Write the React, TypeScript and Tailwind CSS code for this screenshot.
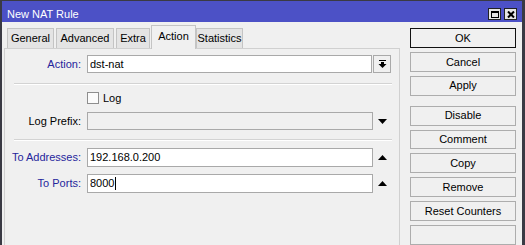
const font = "font-['Liberation_Sans',Arial,sans-serif]"

const tabs = [
  { label: 'General', w: 'w-[47px]', ml: 'ml-[3px]' },
  { label: 'Advanced', w: 'w-[58px]', ml: 'ml-[2px]' },
  { label: 'Extra', w: 'w-[34px]', ml: 'ml-[2px]' },
  { label: 'Action', w: 'w-[45px]', ml: 'ml-[1px]', active: true },
  { label: 'Statistics', w: 'w-[47px]', ml: 'ml-0' },
]

const DownTri = () => (
  <svg width="9" height="5" viewBox="0 0 9 5"><polygon points="0,0 9,0 4.5,5" fill="#000" /></svg>
)
const UpTri = () => (
  <svg width="9" height="5" viewBox="0 0 9 5"><polygon points="0,5 9,5 4.5,0" fill="#000" /></svg>
)

function Btn({ label, primary, className = '' }: { label: string; primary?: boolean; className?: string }) {
  return (
    <div
      className={`h-[22px] w-[106px] flex items-center justify-center text-[11px] text-black bg-[#f0f0f0] ${
        primary ? 'border border-[#111]' : 'border border-[#adadad]'
      } ${className}`}
    >
      {label}
    </div>
  )
}

function Label({ text, blue }: { text: string; blue?: boolean }) {
  return <div className={`w-[76px] shrink-0 text-right text-[11px] ${blue ? 'text-[#25259c]' : 'text-black'}`}>{text}</div>
}

function Sep() {
  return <div className="ml-[9px] w-[378px] h-[2px] border-t border-[#d3d3d3] border-b border-b-white" />
}

export default function App() {
  return (
    <div className={`${font} w-[525px] h-[245px] overflow-hidden bg-[#f0f0f0] border-l-2 border-r-[3px] border-t border-[#3a3a44] flex flex-col`}>
      {/* title bar */}
      <div className="h-[21px] shrink-0 bg-[#4c51c6] flex items-start justify-between pt-[7px] pl-[5px] pr-[5px]">
        <div className="text-[11px] leading-[13px] text-white">New NAT Rule</div>
        <div className="flex gap-[3px]">
          <div className="w-[13px] h-[12px] bg-[#e6e6e6] border border-[#222] flex items-center justify-center">
            <div className="w-[8px] h-[7px] border border-black border-t-2" />
          </div>
          <div className="w-[13px] h-[12px] bg-[#e6e6e6] border border-[#222] flex items-center justify-center">
            <svg width="8" height="7" viewBox="0 0 8 7">
              <path d="M1 0.5 L7 6.5 M7 0.5 L1 6.5" stroke="#000" strokeWidth="2" />
            </svg>
          </div>
        </div>
      </div>

      <div className="flex flex-1 min-h-0">
        {/* left: tabs + pane */}
        <div className="ml-[2px] w-[396px] flex flex-col">
          <div className="h-[26px] flex items-end">
            {tabs.map(t => (
              <div
                key={t.label}
                className={`${t.w} ${t.ml} flex items-center justify-center text-[11px] text-black border border-b-0 border-[#c4c4c4] ${
                  t.active ? 'h-[24px] -mb-px relative z-10 bg-[#f0f0f0] pb-[3px]' : 'h-[20px] bg-[#e4e4e4]'
                }`}
              >
                {t.label}
              </div>
            ))}
          </div>
          <div className="flex-1 border border-b-0 border-[#d0d0d0] pt-[6px]">
            {/* Action */}
            <div className="flex items-center h-[18px]">
              <Label text="Action:" blue />
              <div className="ml-[6px] w-[285px] h-[18px] bg-white border border-[#a9a9a9] flex items-center pl-[2px] text-[11px] text-black">
                dst-nat
              </div>
              <div className="ml-[1px] w-[18px] h-[18px] border border-[#a9a9a9] flex items-center justify-center">
                <svg width="9" height="8" viewBox="0 0 9 8">
                  <rect x="1" y="0" width="7" height="1" fill="#000" />
                  <rect x="3" y="2" width="3" height="2" fill="#000" />
                  <polygon points="0.5,4 8.5,4 4.5,8" fill="#000" />
                </svg>
              </div>
            </div>

            <div className="mt-[10px]"><Sep /></div>

            {/* Log */}
            <div className="mt-[7px] flex items-center h-[12px] pl-[82px]">
              <div className="w-[12px] h-[12px] bg-[#fbfbfb] border border-[#8e8e8e]" />
              <div className="ml-[4px] text-[11px] text-black">Log</div>
            </div>

            {/* Log Prefix */}
            <div className="mt-[8px] flex items-center h-[18px]">
              <Label text="Log Prefix:" />
              <div className="ml-[6px] w-[286px] h-[18px] bg-[#f0f0f0] border border-[#a9a9a9]" />
              <div className="ml-[5px] flex items-center"><DownTri /></div>
            </div>

            <div className="mt-[9px]"><Sep /></div>

            {/* To Addresses */}
            <div className="mt-[7px] flex items-center h-[19px]">
              <Label text="To Addresses:" blue />
              <div className="ml-[6px] w-[286px] h-[19px] bg-white border border-[#a9a9a9] flex items-center pl-[2px] text-[11px] text-black">
                192.168.0.200
              </div>
              <div className="ml-[5px] flex items-center"><UpTri /></div>
            </div>

            {/* To Ports */}
            <div className="mt-[7px] flex items-center h-[19px]">
              <Label text="To Ports:" blue />
              <div className="ml-[6px] w-[286px] h-[19px] bg-white border border-[#a9a9a9] flex items-center pl-[2px] text-[11px] text-black">
                8000<span className="ml-px w-px h-[13px] bg-black" />
              </div>
              <div className="ml-[5px] flex items-center"><UpTri /></div>
            </div>
          </div>
        </div>

        {/* right: buttons */}
        <div className="ml-[10px] pt-[6px] flex flex-col gap-[4px]">
          <Btn label="OK" primary />
          <Btn label="Cancel" />
          <Btn label="Apply" />
          <Btn label="Disable" className="mt-[6px]" />
          <Btn label="Comment" />
          <Btn label="Copy" />
          <Btn label="Remove" />
          <Btn label="Reset Counters" />
          <Btn label="" />
        </div>
      </div>
    </div>
  )
}
